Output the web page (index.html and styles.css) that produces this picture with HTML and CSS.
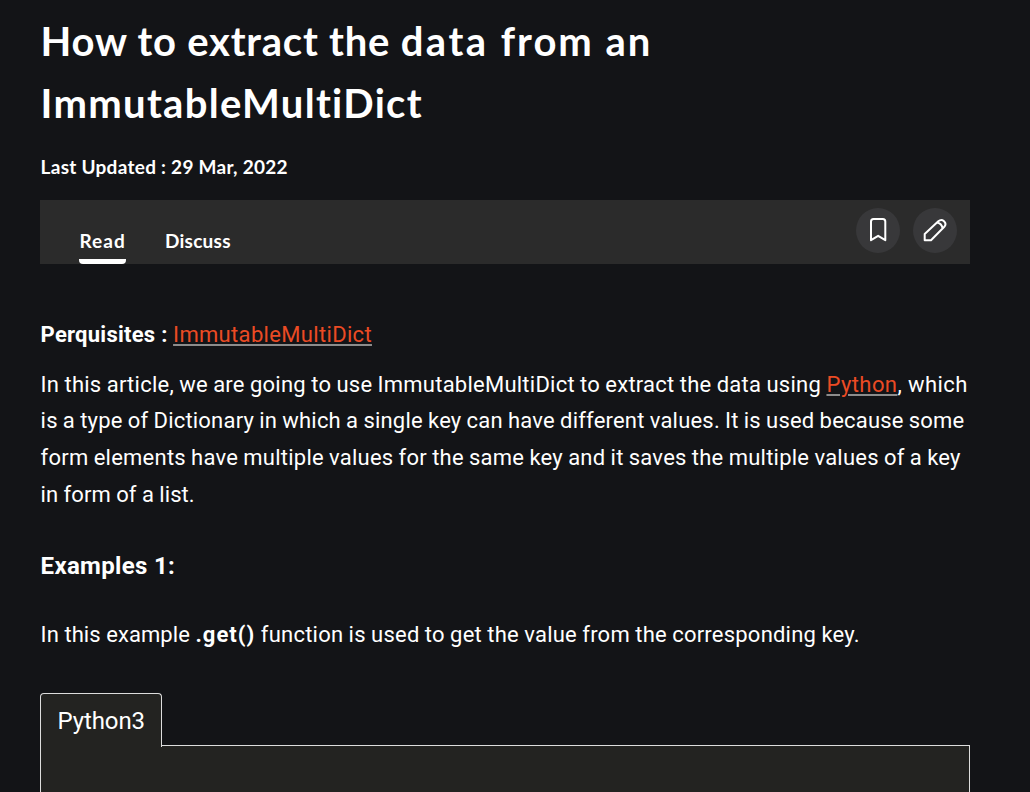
FILE: index.html
```html
<!DOCTYPE html>
<html lang="en">
<head>
<meta charset="utf-8">
<title>How to extract the data from an ImmutableMultiDict</title>
<link rel="stylesheet" href="styles.css">
</head>
<body>
<main class="article">
  <h1 class="title"><span class="line t1">How to extract the <span class="t1-mid">data </span><span class="t1-end">from an</span></span> <span class="line t2">ImmutableMultiDict</span></h1>
  <div class="updated">Last Updated : 29 Mar, 2022</div>
  <div class="toolbar">
    <nav class="tabs"><a class="tab active">Read</a><a class="tab">Discuss</a></nav>
    <div class="actions">
      <button class="action" aria-label="Bookmark"><svg width="26" height="26" viewBox="0 0 26 26"><path d="M6 23.200V4.500Q6 2 8.500 2H17.800Q20.300 2 20.300 4.500V23.200L13.150 18.800Z"/></svg></button>
      <button class="action" aria-label="Improve"><svg width="26" height="26" viewBox="0 0 26 26"><path d="M2.700 23.200V16.900L16.300 4.300Q19.300 1.800 22 4.200Q24.800 7 22.300 9.700L9 23.200ZM14.800 5.600Q19.600 6.400 20.600 11.200"/></svg></button>
    </div>
  </div>
  <p class="pre"><b class="pb">Perquisites :</b> <a class="link pl">ImmutableMultiDict</a></p>
  <p class="body"><span class="line"><span class="s1">In this article, we are going to use ImmutableMultiDict to extract the data using</span> <a class="link s2">Python</a><span class="s3">, which</span></span> <span class="line s4">is a type of Dictionary in which a single key can have different values. It is used because some</span> <span class="line s5">form elements have multiple values for the same key and it saves the multiple values of a key</span> <span class="line s6">in form of a list.</span></p>
  <h2 class="sub">Examples 1:</h2>
  <p class="body ex"><span class="s7">In this example</span> <b class="s8">.get()</b> <span class="s9">function is used to get the value from the corresponding key.</span></p>
  <section class="code">
    <div class="code-tab">Python3</div>
    <div class="code-panel"></div>
  </section>
</main>
</body>
</html>
```
FILE: styles.css
```css
* { box-sizing: border-box; }
body { margin: 0; height: 792px; overflow: hidden; background: #131417; color: #fff; font-family: Roboto, sans-serif; }
.article { width: 930px; margin-left: 40px; padding-top: 10px; }
.line { display: block; width: max-content; white-space: nowrap; }
.title { margin: 0; padding-left: .6px; font: 700 40px/62px Lato, sans-serif; }
.t1 { letter-spacing: .77px; }
.t1-mid { letter-spacing: 2.5px; }
.t1-end { letter-spacing: 1.95px; }
.t2 { letter-spacing: 1.3px; }
.updated { margin-top: 20px; padding-left: .6px; font: 700 19px/26px Lato, sans-serif; letter-spacing: .27px; }
.toolbar { margin-top: 20px; height: 64px; background: #2b2b2b; display: flex; justify-content: space-between; padding: 8px 13px 0 39px; }
.tabs { display: flex; gap: 39px; }
.tab { font: 700 19px/24px Lato, sans-serif; height: 56px; padding-top: 21px; letter-spacing: .25px; }
.tab.active { padding-left: .4px; letter-spacing: 1.1px; border-bottom: 5px solid #fff; border-radius: 0 0 4px 4px; }
.actions { display: flex; gap: 13px; }
.action { width: 44px; height: 45px; border: 0; border-radius: 50%; background: #38383a; padding: 0 0 1px; display: grid; place-items: center; }
.action svg { fill: none; stroke: #fff; stroke-width: 2; stroke-linejoin: round; }
p { font-size: 22px; line-height: 36.67px; margin: 0; padding-left: .6px; white-space: nowrap; }
.pre { margin-top: 53px; }
.pb { letter-spacing: .25px; }
.pl { letter-spacing: .33px; }
.body { margin-top: 13px; }
.s1 { letter-spacing: .24px; word-spacing: -.45px; }
.s2 { letter-spacing: .42px; }
.s3 { letter-spacing: .4px; }
.s4 { letter-spacing: .2px; word-spacing: -.5px; }
.s5 { letter-spacing: .24px; word-spacing: -.54px; }
.s6 { letter-spacing: .08px; word-spacing: -.2px; }
.s7 { letter-spacing: .07px; }
.s8 { letter-spacing: 1.05px; }
.s9 { letter-spacing: .22px; word-spacing: -.36px; }
.link { color: #eb4b24; text-decoration: underline #8c8c8c 2px; text-underline-offset: 2px; }
.sub { margin: 34px 0 0; padding-left: .6px; font-size: 24px; line-height: 38px; letter-spacing: .32px; }
.ex { margin-top: 32px; }
.code { margin-top: 39px; }
.code-tab { position: relative; width: 122px; height: 54px; margin-bottom: -2px; padding: 10px 16.5px; border: 1px solid #ddd; border-bottom: 0; border-radius: 4px 4px 0 0; background: #232321; font-size: 24px; line-height: 34px; letter-spacing: -.1px; }
.code-panel { height: 80px; border: 1px solid #ddd; background: #232321; }
```
